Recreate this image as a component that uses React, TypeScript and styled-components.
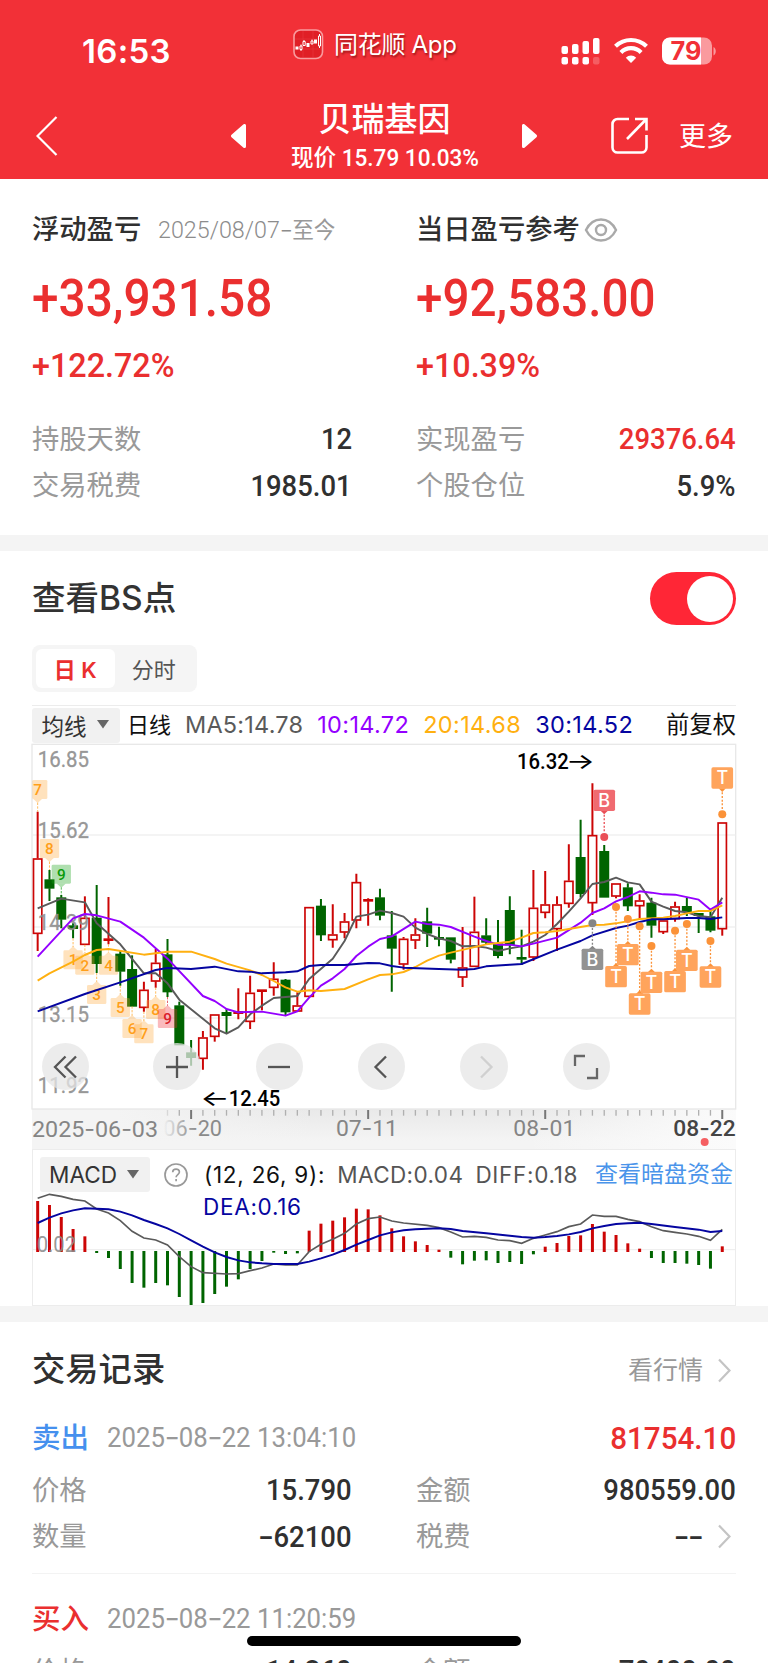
import React from 'react';
import styled, { createGlobalStyle } from 'styled-components';

const CJK = '"Noto Sans CJK SC"';
const UI = `Inter, ${CJK}, sans-serif`;
const DIN = `Roboto, ${CJK}, sans-serif`;
const RED = '#ea2f2f';
const INK = '#303030';
const MUTE = '#999999';

const GlobalStyle = createGlobalStyle`
  *, *::before, *::after { box-sizing: border-box; }
  body { margin: 0; background: #fff; font-family: ${UI}; color: ${INK}; }
  svg { display: block; }
`;

const Screen = styled.main`
  position: relative;
  width: 768px;
  height: 1663px;
  overflow: hidden;
  background: #fff;
`;

/* ---------- shared text ---------- */

const Label = styled.span<{ $size?: number; $color?: string; $weight?: number; $track?: number }>`
  font-family: ${UI};
  font-size: ${(p) => p.$size ?? 27.3}px;
  font-weight: ${(p) => p.$weight ?? 400};
  color: ${(p) => p.$color ?? MUTE};
  letter-spacing: ${(p) => p.$track ?? 0}px;
  line-height: 1;
  white-space: nowrap;
`;

const Digits = styled.span<{ $size?: number; $color?: string; $weight?: number; $narrow?: number; $from?: string }>`
  display: inline-block;
  font-family: ${DIN};
  font-size: ${(p) => p.$size ?? 30}px;
  font-weight: ${(p) => p.$weight ?? 500};
  color: ${(p) => p.$color ?? INK};
  line-height: 1;
  white-space: nowrap;
  transform: scaleX(${(p) => p.$narrow ?? 0.9});
  transform-origin: ${(p) => p.$from ?? 'left'} center;
`;

const WideDash = styled.span`
  display: inline-block;
  padding: 0 0.04em;
  font-family: Inter, sans-serif;
  transform: scaleX(1.3);
`;

function dashed(text: string) {
  return text.split('-').map((part, i) => (
    <React.Fragment key={i}>
      {i > 0 && <WideDash>-</WideDash>}
      {part}
    </React.Fragment>
  ));
}

/* ---------- header ---------- */

const Header = styled.header`
  height: 179px;
  background: #f23037;
  color: #fff;
`;

const StatusBar = styled.div`
  display: grid;
  grid-template-columns: 293px 1fr 208px;
  height: 102px;
`;

const Clock = styled.div`
  padding: 35px 0 0 82px;
  font-size: 33px;
  font-weight: 600;
  line-height: 33px;
  letter-spacing: 0.3px;
`;

const AppTag = styled.div`
  display: flex;
  align-items: center;
  gap: 10px;
  height: 89px;
  font-size: 24px;
  letter-spacing: -0.3px;
  text-shadow: 1px 2px 2px rgba(90, 0, 0, 0.55);
  white-space: nowrap;
`;

const AppName = styled.span`
  margin-top: -4px;
`;

const StatusIcons = styled.div`
  display: flex;
  gap: 14px;
  padding-top: 37px;
`;

const Nav = styled.nav`
  display: flex;
  align-items: center;
  height: 77px;
  padding: 0 35px 9px 36px;
`;

const NavTitle = styled.div`
  display: flex;
  flex-direction: column;
  align-items: center;
  width: 275px;
  padding-top: 5px;
`;

const StockName = styled.h1`
  margin: 0;
  font-size: 33px;
  font-weight: 500;
  line-height: 40px;
`;

const StockQuote = styled.div`
  font-family: ${DIN};
  font-size: 23.500px;
  font-weight: 500;
  line-height: 39px;
  white-space: nowrap;
  transform: scaleX(0.96);
`;

const NavActions = styled.div`
  display: flex;
  align-items: center;
  gap: 30px;
  margin-left: auto;
`;

function StatusHeader() {
  return (
    <Header>
      <StatusBar>
        <Clock>16:53</Clock>
        <AppTag>
          <svg width="31" height="31" viewBox="0 0 31 31" fill="none">
            <rect x="1" y="1" width="28.5" height="28.5" rx="6.5" fill="#e01f26" stroke="#f99b9e" strokeWidth="1.6" />
            <path d="M10 2v26M20 2v26M2 10h26M2 20h26" stroke="#ea3a40" strokeWidth=".6" />
            <path d="M2.5 17.5h3v3h-3zM13.500 14h3v4h-3zM21 10.500h3v4h-3z" fill="#fff" />
            <path d="M7 17h2v3.500H7zM8 15.500V17M8 20.500V22M10 12.500h2.200v4H10zM11 11v1.500M18 12h2v3h-2zM19 10.500V12M25.500 7h2v10h-2zM26.500 5v2M26.500 17v2" stroke="#fff" strokeWidth="1" />
          </svg>
          <AppName>同花顺 App</AppName>
        </AppTag>
        <StatusIcons>
          <svg width="40" height="28" viewBox="0 0 40 28" fill="#fff">
            <rect x="1.500" y="9" width="6.500" height="8" rx="2" />
            <rect x="12" y="7" width="6.500" height="10" rx="2" />
            <rect x="22.500" y="4" width="6.500" height="13" rx="2" />
            <rect x="33" y="1" width="6.500" height="16" rx="2" />
            <rect x="1.500" y="20" width="6.500" height="7.500" rx="2" />
            <rect x="12" y="20" width="6.500" height="7.500" rx="2" />
            <rect x="22.500" y="20" width="6.500" height="7.500" rx="2" />
            <rect x="33" y="20" width="6.500" height="7.500" rx="2" opacity=".22" />
          </svg>
          <svg width="34" height="27" viewBox="0 0 34 27" fill="none" stroke="#fff" strokeWidth="4.200">
            <path d="M1.500 9.200a22.500 22.500 0 0 1 31 0" />
            <path d="M6.900 15.400a14.300 14.300 0 0 1 20.200 0" />
            <path d="M17 26l-5.200-5.300a7.400 7.400 0 0 1 10.400 0z" fill="#fff" stroke="none" />
          </svg>
          <svg width="56" height="28" viewBox="0 0 56 28">
            <rect x="0" y="0.500" width="50" height="27" rx="8" fill="#fa9a9e" />
            <path d="M8 .5h31v27H8a8 8 0 0 1-8-8v-11a8 8 0 0 1 8-8z" fill="#fff" />
            <path d="M51.500 10c3 1.500 3 7 0 8.500z" fill="#fa9a9e" />
            <text x="8.500" y="23" fontFamily="Inter" fontWeight="700" fontSize="25" textLength="31" lengthAdjust="spacingAndGlyphs" fill="#f23037">79</text>
          </svg>
        </StatusIcons>
      </StatusBar>
      <Nav>
        <svg width="22" height="40" viewBox="0 0 22 40" fill="none" stroke="#fff" strokeWidth="2.200">
          <path d="M20.500 1L1.500 20l19 19" />
        </svg>
        <svg width="16" height="24" viewBox="0 0 16 24" style={{ marginLeft: 173 }}>
          <path d="M13.500 1.500v21L1.500 12z" fill="#fff" stroke="#fff" strokeWidth="3" strokeLinejoin="round" />
        </svg>
        <NavTitle>
          <StockName>贝瑞基因</StockName>
          <StockQuote>现价 15.79 10.03%</StockQuote>
        </NavTitle>
        <svg width="16" height="24" viewBox="0 0 16 24">
          <path d="M1.500 1.500v21L13.500 12z" fill="#fff" stroke="#fff" strokeWidth="3" strokeLinejoin="round" />
        </svg>
        <NavActions>
          <svg width="38" height="38" viewBox="0 0 38 38" fill="none" stroke="#fff" strokeWidth="2.600">
            <path d="M18 2H6.500A5 5 0 0 0 1.500 7v23.500a5 5 0 0 0 5 5h24a5 5 0 0 0 5-5V18" />
            <path d="M24 2H35.500V13.500M35.500 2L16 22" />
          </svg>
          <Label $size={27} $color="#fff">更多</Label>
        </NavActions>
      </Nav>
    </Header>
  );
}

/* ---------- profit summary ---------- */

const Summary = styled.section`
  display: grid;
  grid-template-columns: 320px 320px;
  column-gap: 64px;
  height: 356px;
  padding: 31px 32px 0;
`;

const SummaryHead = styled.div`
  display: flex;
  align-items: center;
  height: 40px;
`;

const BigLine = styled.div`
  display: flex;
  align-items: center;
  height: 60px;
  margin-top: 19px;
`;

const RateLine = styled.div`
  display: flex;
  align-items: center;
  height: 40px;
  margin: 16px 0 31px;
`;

const Pair = styled.div`
  display: flex;
  align-items: center;
  justify-content: space-between;
  height: 46.500px;
`;

const PairEnd = styled.div`
  display: flex;
  align-items: center;
  gap: 15px;
  padding-right: 5px;
`;

const Divider = styled.div`
  height: 16px;
  background: #f4f4f4;
`;

const HeadDate = styled.div`
  display: flex;
  align-items: center;
  margin-left: 17px;
`;

function Field({ name, value, color }: { name: string; value: string; color?: string }) {
  return (
    <Pair>
      <Label>{name}</Label>
      <Digits $color={color} $narrow={0.915} $from="right">{dashed(value)}</Digits>
    </Pair>
  );
}

function ProfitSummary() {
  return (
    <Summary>
      <div>
        <SummaryHead>
          <Label $color={INK} $weight={500}>浮动盈亏</Label>
          <HeadDate>
            <Digits $size={24} $weight={300} $color="#8c8c8c" $narrow={0.97}>
              2025/08/07{dashed('-')}<Label $size={22.300}>至今</Label>
            </Digits>
          </HeadDate>
        </SummaryHead>
        <BigLine><Digits $size={52} $narrow={0.918} $color={RED}>+33,931.58</Digits></BigLine>
        <RateLine><Digits $size={34} $narrow={0.95} $color={RED}>+122.72%</Digits></RateLine>
        <Field name="持股天数" value="12" />
        <Field name="交易税费" value="1985.01" />
      </div>
      <div>
        <SummaryHead>
          <Label $color={INK} $weight={500}>当日盈亏参考</Label>
          <svg width="34" height="26" viewBox="0 0 34 26" fill="none" stroke="#a9a9a9" strokeWidth="2.400" style={{ marginLeft: 4 }}>
            <path d="M2 13C5.500 6 10.500 2.500 17 2.500S28.500 6 32 13c-3.500 7-8.500 10.500-15 10.500S5.500 20 2 13z" />
            <circle cx="17" cy="13" r="5" />
          </svg>
        </SummaryHead>
        <BigLine><Digits $size={52} $narrow={0.915} $color={RED}>+92,583.00</Digits></BigLine>
        <RateLine><Digits $size={34} $narrow={0.95} $color={RED}>+10.39%</Digits></RateLine>
        <Field name="实现盈亏" value="29376.64" color={RED} />
        <Field name="个股仓位" value="5.9%" />
      </div>
    </Summary>
  );
}

/* ---------- chart section ---------- */

const ChartSection = styled.section`
  height: 755px;
  padding: 21px 32px 0;
`;

const TitleRow = styled.div<{ $height: number }>`
  display: flex;
  align-items: center;
  justify-content: space-between;
  height: ${(p) => p.$height}px;
`;

const Toggle = styled.div`
  display: flex;
  justify-content: flex-end;
  align-items: center;
  width: 86px;
  height: 53px;
  padding-right: 3px;
  border-radius: 27px;
  background: #ff2636;
  &::after {
    content: '';
    width: 46px;
    height: 46px;
    border-radius: 50%;
    background: #fff;
  }
`;

const Segment = styled.div`
  display: flex;
  width: 165px;
  height: 47px;
  margin-top: 20px;
  padding: 4px;
  border-radius: 8px;
  background: #f5f5f5;
`;

const SegmentItem = styled.div<{ $active?: boolean }>`
  display: flex;
  align-items: center;
  justify-content: center;
  width: 79px;
  padding-bottom: 2px;
  border-radius: 6px;
  font-size: 22px;
  font-weight: ${(p) => (p.$active ? 600 : 400)};
  color: ${(p) => (p.$active ? RED : '#555')};
  background: ${(p) => (p.$active ? '#fff' : 'transparent')};
`;

const AverageRow = styled.div`
  display: flex;
  align-items: center;
  height: 39px;
  margin-top: 13px;
  border-top: 1.500px solid #ececec;
`;

const Picker = styled.div<{ $width: number; $size: number }>`
  display: flex;
  align-items: center;
  justify-content: center;
  gap: 10px;
  width: ${(p) => p.$width}px;
  height: 35px;
  padding-right: 2px;
  padding-bottom: 1px;
  border-radius: 3px;
  background: #f1f1f1;
  font-size: ${(p) => p.$size}px;
  color: #333;
`;

const AverageList = styled.div`
  display: flex;
  flex: 1;
  align-items: center;
  gap: 14px;
  margin-left: 7px;
`;

const Caret = () => (
  <svg width="12" height="9" viewBox="0 0 12 9"><path d="M0 0h12L6 8.500z" fill="#666" /></svg>
);

const KChart = styled.div`
  position: relative;
  height: 365px;
`;

const Plot = styled.svg`
  overflow: visible;
`;

const ChartButtons = styled.div`
  position: absolute;
  left: 9.500px;
  top: 299px;
  display: flex;
  gap: 55px;
`;

const RoundButton = styled.button`
  display: grid;
  place-items: center;
  width: 47.400px;
  height: 47.400px;
  padding: 0;
  border: 0;
  border-radius: 50%;
  background: rgba(229, 229, 229, 0.75);
  &:first-child { margin-right: 9.300px; }
`;

const Axis = styled.div`
  height: 40px;
  background:
    linear-gradient(90deg, #f4f4f4 12%, transparent 40%, transparent 70%, #fbfbfb 100%),
    linear-gradient(180deg, #e9e9e9, #f4f4f4 80%);
`;

const MacdPanel = styled.div`
  position: relative;
  height: 157px;
  border: 1.500px solid #ececec;
`;

const MacdPlot = styled.svg`
  position: absolute;
  left: -1px;
  top: -1px;
  overflow: visible;
`;

const MacdHead = styled.div`
  position: relative;
  display: flex;
  align-items: center;
  height: 35px;
  margin: 7px 0 0 7px;
`;

const MacdValues = styled.div`
  display: flex;
  gap: 12px;
  margin-left: 16px;
  padding-top: 2px;
`;

const MacdSecond = styled.div`
  position: relative;
  padding: 4px 0 0 170px;
`;

const STEP = 35.41;
const xAt = (i: number) => 53 + STEP * i;
const UP = '#cc0505';
const DOWN = '#006400';

/* index = day; [rising, body top, body bottom, high, low] */
const candles: [number, number, number, number, number][] = [
  [1, 370, 596, 230, 648], [0, 434, 460, 405, 498], [0, 488, 553, 480, 580], [0, 572, 581, 565, 610],
  [1, 548, 629, 484, 629], [0, 549, 686, 450, 714], [1, 611, 617, 486, 628], [0, 657, 709, 648, 752],
  [0, 703, 814, 661, 814], [1, 764, 818, 740, 830], [1, 683, 739, 642, 758], [0, 659, 771, 612, 786],
  [0, 812, 930, 800, 930], [0, 953, 968, 915, 992], [1, 907, 971, 888, 1004], [1, 838, 905, 838, 920],
  [0, 832, 842, 822, 895], [1, 829, 836, 760, 853], [1, 773, 860, 722, 882], [1, 764, 770, 764, 826],
  [1, 731, 758, 682, 782], [0, 735, 831, 732, 840], [1, 811, 829, 772, 829], [1, 516, 785, 516, 785],
  [0, 513, 600, 492, 618], [1, 598, 615, 508, 638], [1, 559, 592, 534, 610], [1, 441, 556, 416, 580],
  [1, 493, 499, 490, 572], [0, 488, 541, 461, 556], [0, 602, 640, 528, 770], [1, 611, 688, 606, 704],
  [1, 598, 616, 550, 642], [0, 560, 595, 518, 636], [0, 607, 613, 575, 634], [0, 608, 673, 608, 685],
  [1, 697, 727, 576, 756], [1, 590, 695, 485, 695], [0, 602, 622, 550, 628], [0, 626, 662, 555, 670],
  [0, 526, 630, 484, 658], [0, 667, 673, 584, 690], [1, 518, 667, 405, 678], [1, 508, 533, 408, 550],
  [1, 508, 582, 484, 648], [1, 437, 506, 328, 518], [0, 367, 476, 254, 488], [1, 300, 504, 145, 540],
  [0, 349, 487, 330, 487], [1, 445, 484, 445, 490], [0, 458, 513, 445, 528], [1, 496, 513, 478, 552],
  [0, 504, 571, 488, 608], [1, 556, 591, 556, 597], [1, 514, 552, 500, 560], [0, 514, 530, 488, 543],
  [0, 535, 542, 535, 594], [0, 545, 586, 524, 592], [1, 262, 582, 262, 602],
];

type Pts = [number, number][];
const line = (pts: Pts) => pts.map(([i, v]) => `${xAt(i).toFixed(1)},${v}`).join(' ');

const averages: { color: string; pts: Pts }[] = [
  { color: '#5a5a5a', pts: [[0, 520], [2, 491], [4, 502], [5, 565], [7, 628], [9, 715], [10, 715], [11, 745], [12, 794], [15, 880], [16, 896], [17, 877], [18, 838], [19, 812], [20, 789], [22, 783], [23, 732], [25, 671], [26, 618], [27, 545], [28, 539], [29, 527], [30, 534], [31, 545], [32, 578], [33, 597], [34, 610], [35, 618], [36, 634], [37, 633], [38, 638], [39, 648], [40, 640], [41, 634], [42, 620], [43, 600], [44, 567], [45, 530], [46, 490], [47, 447], [48, 441], [49, 428], [50, 442], [51, 448], [52, 500], [53, 515], [54, 528], [55, 532], [56, 543], [57, 547], [58, 488]] },
  { color: '#9400ff', pts: [[0, 665], [3, 550], [4, 537], [5, 541], [7, 560], [9, 608], [11, 671], [14, 783], [15, 798], [16, 822], [17, 832], [19, 830], [21, 842], [22, 829], [23, 788], [24, 752], [25, 730], [26, 702], [27, 663], [28, 635], [29, 612], [30, 604], [32, 560], [33, 567], [34, 569], [35, 576], [37, 605], [38, 618], [39, 629], [40, 629], [41, 634], [42, 626], [44, 608], [46, 563], [47, 534], [48, 520], [49, 499], [50, 486], [51, 469], [52, 473], [53, 478], [54, 479], [56, 494], [57, 524], [58, 502]] },
  { color: '#ffb010', pts: [[0, 737], [1, 715], [3, 680], [4, 660], [5, 645], [6, 642], [9, 659], [11, 650], [13, 650], [15, 672], [16, 686], [18, 706], [19, 720], [20, 738], [21, 757], [22, 770], [23, 766], [24, 768], [26, 762], [28, 733], [29, 720], [30, 718], [31, 711], [32, 696], [33, 677], [34, 662], [35, 653], [38, 628], [40, 620], [41, 608], [42, 594], [43, 592], [44, 588], [47, 570], [48, 569], [49, 565], [51, 552], [53, 548], [54, 543], [55, 535], [56, 528], [57, 528], [58, 511]] },
  { color: '#0505a0', pts: [[0, 829], [4, 777], [7, 742], [10, 705], [11, 699], [13, 702], [15, 695], [17, 709], [18, 710], [19, 715], [21, 712], [22, 709], [23, 693], [24, 690], [26, 690], [28, 684], [29, 685], [30, 693], [31, 698], [34, 702], [36, 704], [37, 702], [38, 694], [40, 689], [41, 687], [44, 644], [46, 618], [47, 601], [49, 579], [50, 572], [51, 561], [52, 553], [53, 553], [55, 549], [56, 549], [57, 552], [58, 547]] },
];

/* sequence marks: day, box top, digit, kind, above candle, candle edge */
const sequence: { i: number; y: number; n: number; kind: 'o' | 'g' | 'r'; above?: boolean; edge: number }[] = [
  { i: 0, y: 135, n: 7, kind: 'o', above: true, edge: 230 },
  { i: 1, y: 312, n: 8, kind: 'o', above: true, edge: 405 },
  { i: 2, y: 389, n: 9, kind: 'g', above: true, edge: 480 },
  { i: 3, y: 646, n: 1, kind: 'o', edge: 610 },
  { i: 4, y: 662, n: 2, kind: 'o', edge: 629 },
  { i: 5, y: 750, n: 3, kind: 'o', edge: 714 },
  { i: 6, y: 662, n: 4, kind: 'o', edge: 628 },
  { i: 7, y: 789, n: 5, kind: 'o', edge: 752 },
  { i: 8, y: 852, n: 6, kind: 'o', edge: 814 },
  { i: 9, y: 868, n: 7, kind: 'o', edge: 830 },
  { i: 10, y: 795, n: 8, kind: 'o', edge: 758 },
  { i: 11, y: 822, n: 9, kind: 'r', edge: 786 },
];
const seqFill = { o: 'rgba(255,165,50,.32)', g: 'rgba(20,160,20,.34)', r: 'rgba(240,40,50,.32)' };
const seqInk = { o: '#ff9f1a', g: '#0a9a0a', r: '#d9202a' };

/* trade flags: day, box top, letter, dot height */
const flags: { i: number; y: number; t: string; dot: number; fill: string; ink: string }[] = [
  { i: 48, y: 165, t: 'B', dot: 306, fill: '#f06a70', ink: '#ea4f57' },
  { i: 58, y: 98, t: 'T', dot: 238, fill: '#ffa45c', ink: '#fb9238' },
  { i: 47, y: 642, t: 'B', dot: 565, fill: '#929292', ink: '#858585' },
  { i: 51, y: 776, t: 'T', dot: 574, fill: '#ffa45c', ink: '#fb9238' },
  { i: 49, y: 694, t: 'T', dot: 516, fill: '#ffa45c', ink: '#fb9238' },
  { i: 50, y: 628, t: 'T', dot: 552, fill: '#ffa45c', ink: '#fb9238' },
  { i: 52, y: 711, t: 'T', dot: 633, fill: '#ffa45c', ink: '#fb9238' },
  { i: 54, y: 709, t: 'T', dot: 587, fill: '#ffa45c', ink: '#fb9238' },
  { i: 55, y: 645, t: 'T', dot: 567, fill: '#ffa45c', ink: '#fb9238' },
  { i: 57, y: 695, t: 'T', dot: 618, fill: '#ffa45c', ink: '#fb9238' },
];

function CandleChart() {
  return (
    <Plot width="704" height="365" viewBox="36 27 2112 1095">
      <rect x="36" y="28" width="2111" height="1094" fill="none" stroke="#e8e8e8" strokeWidth="4" />
      {[300, 576, 849].map((y) => (
        <path key={y} d={`M37 ${y}H2146`} stroke="#f0f0f0" strokeWidth="5" />
      ))}
      {candles.map(([up, top, bottom, high, low], i) => {
        const x = xAt(i);
        const color = up ? UP : DOWN;
        const flat = bottom - top < 12;
        return (
          <g key={i}>
            <path d={`M${x} ${high}V${top}M${x} ${bottom}V${low}`} stroke={color} strokeWidth="6" />
            {up && !flat ? (
              <rect x={x - 12.5} y={top + 2} width="25" height={bottom - top - 3} fill="none" stroke={color} strokeWidth="5" />
            ) : (
              <rect x={x - 15} y={top - 1} width="30" height={bottom - top + 2} fill={color} />
            )}
          </g>
        );
      })}
      <g fontFamily={DIN} fontSize="66" fill="#8c8c8c" fillOpacity=".9" stroke="#8c8c8c" strokeOpacity=".6" strokeWidth="1.500">
        {([['16.85', 95], ['15.62', 310], ['14.39', 585], ['13.15', 860], ['11.92', 1075]] as [string, number][]).map(([t, y]) => (
          <text key={t} x="53" y={y} textLength="154" lengthAdjust="spacingAndGlyphs">{t}</text>
        ))}
      </g>
      {sequence.map(({ i, y, n, kind, above, edge }) => {
        const x = xAt(i);
        const left = Math.max(x - 29, 37);
        return (
          <g key={i}>
            <path d={above ? `M${x} ${y + 68}V${edge}` : `M${x} ${edge}V${y - 10}`} stroke={seqInk[kind]} strokeOpacity=".7" strokeWidth="3" strokeDasharray="7 4" />
            <rect x={left} y={y} width={x + 29 - left} height="57" rx="4" fill={seqFill[kind]} />
            <path d={above ? `M${x - 13} ${y + 57}h26l-13 12z` : `M${x - 13} ${y}h26l-13-12z`} fill={seqFill[kind]} />
            <text x={x} y={y + 45} textAnchor="middle" fontFamily={DIN} fontWeight="500" fontSize="46" fill={seqInk[kind]}>{n}</text>
          </g>
        );
      })}
      {averages.map((a) => (
        <polyline key={a.color} points={line(a.pts)} fill="none" stroke={a.color} strokeWidth="5.800" strokeLinejoin="round" />
      ))}
      {flags.map(({ i, y, t, dot, fill, ink }) => {
        const x = xAt(i);
        const above = dot > y;
        return (
          <g key={i}>
            <path d={above ? `M${x} ${y + 74}V${dot - 14}` : `M${x} ${dot + 14}V${y - 8}`} stroke={ink} strokeWidth="4" strokeDasharray="6 5" />
            <circle cx={x} cy={dot} r="12" fill={ink} />
            <path d={above ? `M${x - 11} ${y + 62}h22l-11 11z` : `M${x - 11} ${y + 1}h22l-11-11z`} fill={ink} />
            <rect x={x - 32.5} y={y - 1} width="65" height="64" rx="5" fill={fill} />
            <text x={x} y={y + 50} textAnchor="middle" fontFamily="Inter" fontWeight="500" fontSize="54" fill="#fff">{t}</text>
          </g>
        );
      })}
      <g fontFamily={DIN} fontWeight="500" fontSize="66" fill="#000">
        <text x="1491" y="101" textLength="155" lengthAdjust="spacingAndGlyphs">16.32</text>
        <text x="1637" y="101" textLength="88" lengthAdjust="spacingAndGlyphs" fontFamily="Inter" fontWeight="400">→</text>
        <text x="626" y="1114" textLength="155" lengthAdjust="spacingAndGlyphs">12.45</text>
        <text x="541" y="1114" textLength="88" lengthAdjust="spacingAndGlyphs" fontFamily="Inter" fontWeight="400">←</text>
      </g>
    </Plot>
  );
}

const glyphs = [
  { name: '更早', d: 'M15.500 4.500L5 15l10.500 10.500M26 4.500L15.500 15 26 25.500', color: '#555' },
  { name: '放大', d: 'M4 15h22M15 4v22', color: '#555' },
  { name: '缩小', d: 'M4 15h22', color: '#555' },
  { name: '左移', d: 'M19 4.500L8.500 15 19 25.500', color: '#555' },
  { name: '右移', d: 'M12 4.500L22.500 15 12 25.500', color: '#d0d0d0' },
  { name: '全屏', d: 'M4 14V4h10M26 16v10H16', color: '#666' },
];

const minorTicks = Array.from({ length: 48 }, (_, k) => k + 11);
const majorTicks = [13, 28, 43, 58];

function TimeAxis() {
  return (
    <Axis>
      <Plot width="704" height="40" viewBox="36 57 2112 120">
        <defs>
          <linearGradient id="fade" x1="0" x2="1">
            <stop offset="0" stopColor="#8a8a8a" stopOpacity="0" />
            <stop offset=".35" stopColor="#8a8a8a" stopOpacity=".7" />
            <stop offset=".6" stopColor="#8a8a8a" />
          </linearGradient>
        </defs>
        {minorTicks.map((i) => {
          const major = majorTicks.includes(i);
          return <path key={i} d={`M${xAt(i)} 60V${major ? 87 : 77}`} stroke={major ? '#777' : '#b0b0b0'} strokeOpacity={i < 12 ? 0.4 : 1} strokeWidth={major ? 6 : 4} />;
        })}
        <g fontFamily={DIN} fontSize="68" fill="#858585">
          <text x="36" y="140" textLength="378" lengthAdjust="spacingAndGlyphs">2025<tspan fontFamily="Inter">-</tspan>06<tspan fontFamily="Inter">-</tspan>03</text>
          <text x="430" y="138" textLength="176" lengthAdjust="spacingAndGlyphs" fill="url(#fade)">06<tspan fontFamily="Inter">-</tspan>20</text>
          <text x="948" y="138" textLength="186" lengthAdjust="spacingAndGlyphs">07<tspan fontFamily="Inter">-</tspan>11</text>
          <text x="1480" y="138" textLength="186" lengthAdjust="spacingAndGlyphs">08<tspan fontFamily="Inter">-</tspan>01</text>
          <text x="1960" y="138" textLength="187" lengthAdjust="spacingAndGlyphs" fill="#444" fontWeight="500">08<tspan fontFamily="Inter">-</tspan>22</text>
        </g>
        <circle cx="2054" cy="156" r="12" fill="#f55f62" />
      </Plot>
    </Axis>
  );
}

/* histogram: positive entries rise to the given height, negative ones fall to it */
const bars = [333, 345, 381, 417, 439, 489, 504, 537, 579, 593, 579, 586, 621, 645, 639, 612, 590, 568, 537, 513, 488, 492, 490, 422, 401, 392, 382, 356, 358, 376, 415, 439, 454, 465, 479, 503, 523, 512, 511, 519, 516, 522, 493, 470, 459, 438, 436, 402, 425, 435, 460, 476, 504, 519, 519, 521, 525, 536, 469];
const diff: Pts = [[0, 325], [1, 313], [2, 319], [3, 328], [4, 333], [5, 357], [6, 369], [7, 392], [8, 424], [9, 444], [10, 450], [11, 465], [12, 500], [13, 530], [14, 548], [16, 552], [17, 551], [18, 542], [19, 534], [20, 522], [21, 525], [22, 525], [23, 485], [24, 463], [25, 448], [26, 430], [27, 402], [28, 386], [29, 381], [30, 393], [31, 399], [33, 406], [34, 413], [35, 426], [36, 441], [37, 439], [38, 442], [39, 450], [40, 452], [41, 460], [42, 445], [43, 435], [44, 425], [45, 410], [46, 402], [47, 375], [48, 379], [49, 379], [50, 388], [51, 395], [52, 410], [53, 422], [54, 427], [55, 432], [56, 439], [57, 451], [58, 418]];
const dea: Pts = [[0, 399], [1, 383], [2, 370], [3, 361], [4, 355], [5, 356], [6, 358], [7, 365], [8, 376], [9, 390], [10, 402], [11, 415], [12, 432], [13, 451], [14, 470], [15, 487], [16, 501], [17, 511], [18, 517], [19, 520], [20, 522], [22, 522], [23, 515], [24, 505], [25, 494], [26, 480], [27, 464], [28, 450], [29, 436], [30, 427], [31, 421], [32, 418], [34, 415], [35, 417], [36, 423], [38, 430], [40, 437], [41, 441], [42, 443], [43, 441], [44, 438], [45, 433], [46, 426], [47, 415], [48, 408], [49, 402], [50, 400], [51, 398], [52, 402], [54, 411], [56, 419], [57, 426], [58, 423]];

function Macd() {
  return (
    <MacdPanel>
      <MacdPlot width="704" height="156" viewBox="36 177 2112 468">
        <path d="M37 479H2146" stroke="#ececec" strokeWidth="3" />
        {bars.map((v, i) => (
          <path key={i} d={v < 484 ? `M${xAt(i)} ${v}V486` : `M${xAt(i)} 483V${v}`} stroke={v < 484 ? UP : DOWN} strokeWidth="9" />
        ))}
        <text x="50" y="487" fontFamily={DIN} fontSize="66" fill="#8c8c8c" fillOpacity=".9" textLength="118" lengthAdjust="spacingAndGlyphs">0.02</text>
        <polyline points={line(diff)} fill="none" stroke="#5a5a5a" strokeWidth="5" />
        <polyline points={line(dea)} fill="none" stroke="#0505a0" strokeWidth="5.800" />
      </MacdPlot>
      <MacdHead>
        <Picker $width={110} $size={22.600}>MACD<Caret /></Picker>
        <svg width="24" height="24" viewBox="0 0 24 24" fill="none" stroke="#999" strokeWidth="1.700" style={{ marginLeft: 14 }}>
          <circle cx="12" cy="12" r="11" />
          <path d="M8.700 9.300c0-4.400 6.700-4.200 6.700-.3 0 2.500-3.300 2.600-3.300 5.200M12.100 16v2.200" />
        </svg>
        <MacdValues>
          <Label $size={22.500} $color="#111" $track={0.75}>(12, 26, 9):</Label>
          <Label $size={22.500} $color="#555" $track={0.4}>MACD:0.04</Label>
          <Label $size={22.500} $color="#555" $track={0.7}>DIFF:0.18</Label>
        </MacdValues>
        <Label $size={23} $color="#4a94ea" style={{ marginLeft: 'auto', marginRight: 2 }}>查看暗盘资金</Label>
      </MacdHead>
      <MacdSecond><Label $size={22.500} $color="#0505a0" $track={0.7}>DEA:0.16</Label></MacdSecond>
    </MacdPanel>
  );
}

function PointsSection() {
  return (
    <ChartSection>
      <TitleRow $height={53}>
        <Label $size={33.500} $color="#333" $weight={500}>查看BS点</Label>
        <Toggle role="switch" aria-checked="true" />
      </TitleRow>
      <Segment>
        <SegmentItem $active>日 K</SegmentItem>
        <SegmentItem>分时</SegmentItem>
      </Segment>
      <AverageRow>
        <Picker $width={88} $size={22.500}>均线<Caret /></Picker>
        <AverageList>
          <Label $size={22} $color="#111">日线</Label>
          <Label $size={23.500} $color="#5a5a5a" $track={0.2}>MA5:14.78</Label>
          <Label $size={23.500} $color="#9400ff" $track={0.35}>10:14.72</Label>
          <Label $size={23.500} $color="#ffb010" $track={0.35}>20:14.68</Label>
          <Label $size={23.500} $color="#0505a0" $track={0.35}>30:14.52</Label>
        </AverageList>
        <Label $size={23.300} $color="#111">前复权</Label>
      </AverageRow>
      <KChart>
        <CandleChart />
        <ChartButtons>
          {glyphs.map((g) => (
            <RoundButton key={g.name}>
              <svg width="30" height="30" viewBox="0 0 30 30" fill="none" stroke={g.color} strokeWidth="2.300">
                <path d={g.d} />
              </svg>
            </RoundButton>
          ))}
        </ChartButtons>
      </KChart>
      <TimeAxis />
      <Macd />
    </ChartSection>
  );
}

/* ---------- trade records ---------- */

const Records = styled.section`
  padding: 23px 32px 0;
`;

const MoreLink = styled.div`
  display: flex;
  align-items: center;
  gap: 15px;
  padding-right: 5px;
`;

const Trade = styled.article`
  padding-bottom: 13px;
  border-bottom: 1.500px solid #f3f3f3;
  margin-top: 20px;
  & + & { margin-top: 22px; }
`;

const TradeHead = styled.div`
  display: flex;
  align-items: center;
  height: 46px;
  margin-bottom: 6px;
`;

const TradeTime = styled.div`
  flex: 1;
  margin-left: 18px;
`;

const TradeGrid = styled.div`
  display: grid;
  grid-template-columns: 320px 320px;
  column-gap: 64px;
`;

const Chevron = () => (
  <svg width="13" height="25" viewBox="0 0 13 25" fill="none" stroke="#c4c4c4" strokeWidth="2.200">
    <path d="M1 1.500l10.500 11L1 23.500" />
  </svg>
);

function TradeItem(p: { side: string; color: string; time: string; gain?: string; price: string; amount: string; count: string; fee: string }) {
  return (
    <Trade>
      <TradeHead>
        <Label $size={28.500} $weight={500} $color={p.color}>{p.side}</Label>
        <TradeTime><Digits $size={28.300} $weight={400} $narrow={0.91} $color={MUTE}>{dashed(p.time)}</Digits></TradeTime>
        {p.gain && <Digits $size={32} $narrow={0.925} $color={RED} $from="right">{p.gain}</Digits>}
      </TradeHead>
      <TradeGrid>
        <Field name="价格" value={p.price} />
        <Field name="金额" value={p.amount} />
        <Field name="数量" value={p.count} />
        <Pair>
          <Label>税费</Label>
          <PairEnd><Digits $from="right">{dashed(p.fee)}</Digits><Chevron /></PairEnd>
        </Pair>
      </TradeGrid>
    </Trade>
  );
}

const HomeBar = styled.div`
  position: absolute;
  left: 247px;
  top: 1636px;
  width: 274px;
  height: 10px;
  border-radius: 5px;
  background: #000;
`;

export default function App() {
  return (
    <Screen>
      <GlobalStyle />
      <StatusHeader />
      <ProfitSummary />
      <Divider />
      <PointsSection />
      <Divider />
      <Records>
        <TitleRow $height={50}>
          <Label $size={33.300} $color={INK} $weight={500}>交易记录</Label>
          <MoreLink><Label $size={25}>看行情</Label><Chevron /></MoreLink>
        </TitleRow>
        <TradeItem side="卖出" color="#4590ee" time="2025-08-22 13:04:10" gain="81754.10" price="15.790" amount="980559.00" count="-62100" fee="--" />
        <TradeItem side="买入" color={RED} time="2025-08-22 11:20:59" price="14.360" amount="70400.00" count="4900" fee="--" />
      </Records>
      <HomeBar />
    </Screen>
  );
}
